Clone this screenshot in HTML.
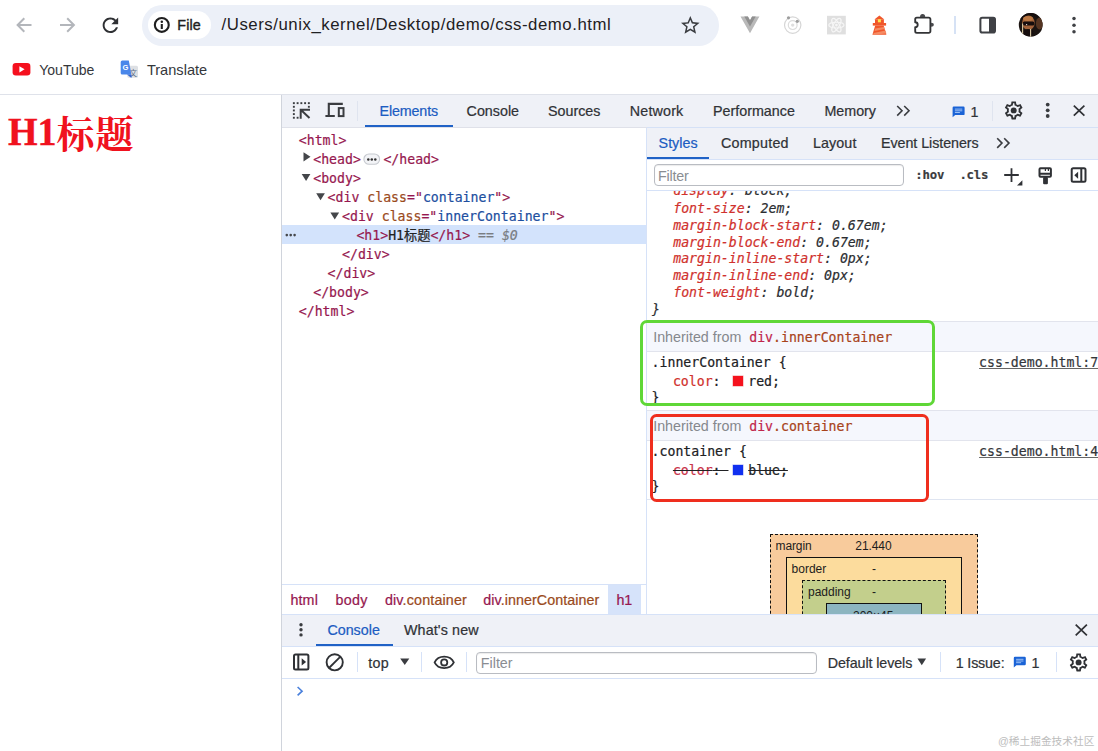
<!DOCTYPE html>
<html lang="zh">
<head>
<meta charset="utf-8">
<title>css-demo</title>
<style>
*{box-sizing:border-box;margin:0;padding:0}
html,body{width:1098px;height:751px;overflow:hidden;background:#fff}
body{position:relative;font-family:"Liberation Sans","Noto Sans CJK SC",sans-serif;color:#2b2d31;-webkit-font-smoothing:antialiased}
.a{position:absolute}
.t{position:absolute;white-space:nowrap;line-height:20px;height:20px}
.s{font-family:"Liberation Sans","Noto Sans CJK SC",sans-serif}
.m{font-family:"DejaVu Sans Mono","Liberation Mono","Noto Sans CJK SC",monospace;font-size:13.19px;-webkit-text-stroke:0.2px}
.av{color:#1d4f9f}
.pr{color:#d0312d}
.ui{font-size:14.3px;color:#303236;-webkit-text-stroke:0.22px}
.sel{color:#1b5cc2}
.tag{color:#96184f}
.an{color:#9a4a1c}
.vl{position:absolute;width:1px;background:#d6e2f8}
.hl{position:absolute;height:1px;background:#d6e2f8}
svg{position:absolute;overflow:visible}
</style>
</head>
<body>

<!-- ================= BROWSER CHROME ================= -->
<div class="a" id="chrome" style="left:0;top:0;width:1098px;height:94px;background:#fff"></div>
<div class="a" style="left:142px;top:5px;width:576.5px;height:40.5px;border-radius:20.25px;background:#ecf0f8"></div>
<div class="a" style="left:147.8px;top:10.6px;width:63.3px;height:28.6px;border-radius:14.3px;background:#fff"></div>
<div class="t s" id="file" style="left:177.3px;top:15.2px;font-size:14.3px;color:#1f1f1f;-webkit-text-stroke:0.4px #1f1f1f;letter-spacing:0.1px">File</div>
<div class="t s" id="url" style="left:221.6px;top:15.2px;font-size:16.8px;letter-spacing:0.535px;color:#1f2023">/Users/unix_kernel/Desktop/demo/css-demo.html</div>

<!-- bookmarks -->
<div class="t s" id="yt" style="left:39.2px;top:59.5px;font-size:14.05px;color:#35373b">YouTube</div>
<div class="t s" id="tr" style="left:146.9px;top:59.5px;font-size:14.6px;color:#35373b">Translate</div>
<div class="hl" style="left:0;top:94px;width:1098px;background:#dfe2ea"></div>

<!-- ================= PAGE ================= -->
<div class="a" id="h1" style="left:8px;top:110px;font-family:'Liberation Serif','Noto Serif CJK SC',serif;font-weight:bold;font-size:38px;line-height:46px;color:#f0121e;white-space:nowrap"><span id="h1lat" style="display:inline-block;transform:translateY(-0.6px) scaleY(1.065);transform-origin:50% 76%;-webkit-text-stroke:0.35px #f0121e">H1</span><span style="position:relative;top:1.6px;letter-spacing:0.9px">标题</span></div>

<!-- ================= DEVTOOLS ================= -->
<div class="vl" style="left:281px;top:95px;height:656px;background:#d0d4dc"></div>
<div class="a" id="dt-toolbar" style="left:282px;top:95px;width:816px;height:32px;background:#eff1f7"></div>
<div class="hl" style="left:282px;top:126.5px;width:365px;background:#dfe1e9"></div><div class="hl" style="left:647px;top:126.5px;width:451px;background:#d5e1f6"></div>

<div class="t s ui sel" id="tab-elements" style="left:379.5px;top:100.5px;letter-spacing:-0.13px">Elements</div>
<div class="a" style="left:365px;top:125px;width:87.5px;height:2px;background:#2062c6"></div>
<div class="t s ui" id="tab-console" style="left:466.6px;top:100.5px">Console</div>
<div class="t s ui" id="tab-sources" style="left:548px;top:100.5px">Sources</div>
<div class="t s ui" id="tab-network" style="left:629.8px;top:100.5px;letter-spacing:0.17px">Network</div>
<div class="t s ui" id="tab-perf" style="left:713px;top:100.5px">Performance</div>
<div class="t s ui" id="tab-memory" style="left:824.4px;top:100.5px">Memory</div>
<div class="t s ui" id="tab-one" style="left:970.5px;top:101.5px">1</div>
<div class="vl" style="left:356.5px;top:101px;height:20px;background:#dfe4ef"></div>
<div class="vl" style="left:991.5px;top:101px;height:20px;background:#dfe4ef"></div>

<!-- ELEMENTS TREE -->
<div class="a" style="left:282px;top:225.4px;width:364px;height:18.2px;background:#d3e3fc"></div>
<div class="t m tag" style="left:298.8px;top:130.5px">&lt;html&gt;</div>
<div class="t m tag" style="left:313.2px;top:149.6px">&lt;head&gt;<span style="display:inline-block;width:22.6px"></span>&lt;/head&gt;</div>
<div class="t m tag" style="left:313.2px;top:168.7px">&lt;body&gt;</div>
<div class="t m tag" style="left:327.6px;top:187.8px">&lt;div <span class="an">class</span>="<span class="av">container</span>"&gt;</div>
<div class="t m tag" style="left:342.0px;top:206.9px">&lt;div <span class="an">class</span>="<span class="av">innerContainer</span>"&gt;</div>
<div class="t m tag" id="h1line" style="left:356.4px;top:226.0px">&lt;h1&gt;<span style="color:#222">H1标题</span>&lt;/h1&gt;<span style="color:#7a7d82"> == <i>$0</i></span></div>
<div class="t m tag" style="left:342.0px;top:245.1px">&lt;/div&gt;</div>
<div class="t m tag" style="left:327.6px;top:264.2px">&lt;/div&gt;</div>
<div class="t m tag" style="left:313.2px;top:283.3px">&lt;/body&gt;</div>
<div class="t m tag" style="left:298.8px;top:302.4px">&lt;/html&gt;</div>

<!-- BREADCRUMBS -->
<div class="hl" style="left:282px;top:584px;width:364px"></div>
<div class="a" style="left:608px;top:585px;width:33px;height:29px;background:#d6e3fa"></div>
<div class="t s ui tag" id="bc-html" style="left:290.4px;top:590px;letter-spacing:0.15px">html</div>
<div class="t s ui tag" id="bc-body" style="left:335.4px;top:590px;letter-spacing:0.3px">body</div>
<div class="t s ui tag" id="bc-c" style="left:384.9px;top:590px;letter-spacing:0.16px">div<span class="an">.container</span></div>
<div class="t s ui tag" id="bc-ic" style="left:483.2px;top:590px;letter-spacing:0.07px">div<span class="an">.innerContainer</span></div>
<div class="t s ui tag" id="bc-h1" style="left:616.4px;top:590px">h1</div>

<!-- pane divider -->
<div class="vl" style="left:646px;top:128px;height:486px"></div>

<!-- STYLES PANE placeholder -->
<div id="styles">
<!-- styles tab bar -->
<div class="a" style="left:647px;top:128px;width:451px;height:31px;background:#eff1f7"></div>
<div class="hl" style="left:647px;top:159px;width:451px"></div>
<div class="t s ui sel" id="st-styles" style="left:658.6px;top:133px">Styles</div>
<div class="a" style="left:647px;top:157px;width:62px;height:2px;background:#2062c6"></div>
<div class="t s ui" id="st-computed" style="left:721px;top:133px;letter-spacing:0.22px">Computed</div>
<div class="t s ui" id="st-layout" style="left:813px;top:133px;letter-spacing:0.09px">Layout</div>
<div class="t s ui" id="st-events" style="left:881px;top:133px;letter-spacing:-0.06px">Event Listeners</div>
<!-- filter row -->
<div class="a" style="left:653.5px;top:164px;width:250px;height:22px;border:1px solid #b9bcc2;border-radius:4px;background:#fff;box-shadow:inset 0 1px 1px rgba(0,0,0,.08)"></div>
<div class="t s" id="st-filter" style="left:658px;top:165.5px;font-size:14.3px;color:#8a8d92;letter-spacing:-0.2px">Filter</div>
<div class="t m" id="st-hov" style="left:915.3px;top:165px;font-size:12.3px;font-weight:bold;color:#3a3c40;letter-spacing:-0.18px">:hov</div>
<div class="t m" id="st-cls" style="left:959.4px;top:165px;font-size:12.3px;font-weight:bold;color:#3a3c40;letter-spacing:-0.18px">.cls</div>
<div class="hl" style="left:647px;top:190px;width:451px"></div>
<!-- UA rule (clipped) -->
<div class="a" style="left:647px;top:191px;width:451px;height:130px;overflow:hidden">
 <div class="t m" style="left:26.2px;top:-10.2px;font-style:italic"><span class="pr">display</span>: block;</div>
</div>
<div class="t m" style="left:673.2px;top:198.8px;font-style:italic"><span class="pr">font-size</span>: 2em;</div>
<div class="t m" style="left:673.2px;top:215.6px;font-style:italic"><span class="pr">margin-block-start</span>: 0.67em;</div>
<div class="t m" style="left:673.2px;top:232.5px;font-style:italic"><span class="pr">margin-block-end</span>: 0.67em;</div>
<div class="t m" style="left:673.2px;top:249.3px;font-style:italic"><span class="pr">margin-inline-start</span>: 0px;</div>
<div class="t m" style="left:673.2px;top:266.2px;font-style:italic"><span class="pr">margin-inline-end</span>: 0px;</div>
<div class="t m" style="left:673.2px;top:283.0px;font-style:italic"><span class="pr">font-weight</span>: bold;</div>
<div class="t m" style="left:652.0px;top:299.8px;font-style:italic">}</div>

<!-- inherited 1 -->
<div class="a" style="left:647px;top:321.4px;width:451px;height:30.6px;background:#f5f7fd;border-top:1px solid #e2e4ed;border-bottom:1px solid #e2e4ed"></div>
<div class="t s" id="inh1" style="left:653.2px;top:326.5px;font-size:14.3px;color:#85888d">Inherited from</div>
<div class="t m" id="inh1m" style="left:749.2px;top:327.8px"><span style="color:#c0264b">div</span><span style="color:#a8431b">.innerContainer</span></div>
<div class="t m" style="left:651.6px;top:352.8px;color:#202124">.innerContainer {</div>
<div class="t m" style="left:672.9px;top:372.1px;color:#202124"><span class="pr">color</span>: </div>
<div class="a" style="left:732.6px;top:376.1px;width:10.8px;height:10.2px;background:#f5121d;box-shadow:0 0 0 .5px #f0a0a0"></div>
<div class="t m" style="left:748.2px;top:372.1px;color:#202124">red;</div>
<div class="t m" style="left:651.6px;top:388.3px;color:#202124">}</div>
<div class="t m" id="lnk7" style="left:979.1px;top:353.2px;color:#34363a;text-decoration:underline;text-decoration-thickness:1px;text-decoration-color:#666;text-underline-offset:1.2px">css-demo.html:7</div>

<!-- inherited 2 -->
<div class="a" style="left:647px;top:410.2px;width:451px;height:30.6px;background:#f5f7fd;border-top:1px solid #e2e4ed;border-bottom:1px solid #e2e4ed"></div>
<div class="t s" id="inh2" style="left:653.2px;top:415.5px;font-size:14.3px;color:#85888d">Inherited from</div>
<div class="t m" id="inh2m" style="left:749.2px;top:416.8px"><span style="color:#c0264b">div</span><span style="color:#a8431b">.container</span></div>
<div class="t m" style="left:651.6px;top:441.8px;color:#202124">.container {</div>
<div class="t m" style="left:672.9px;top:461.2px;color:#202124;text-decoration:line-through"><span style="color:#c9334a">color</span>:&nbsp;</div>
<div class="a" style="left:732.6px;top:465.1px;width:10.8px;height:10.2px;background:#1030f0;box-shadow:0 0 0 .5px #a0a8f0"></div>
<div class="t m" style="left:748.2px;top:461.2px;color:#202124;text-decoration:line-through">blue;</div>
<div class="t m" style="left:651.6px;top:476.8px;color:#202124">}</div>
<div class="t m" id="lnk4" style="left:979.1px;top:442.2px;color:#34363a;text-decoration:underline;text-decoration-thickness:1px;text-decoration-color:#666;text-underline-offset:1.2px">css-demo.html:4</div>
<div class="hl" style="left:647px;top:499px;width:451px;background:#dfe5f1"></div>

<!-- annotation boxes -->
<div class="a" style="left:640.1px;top:320px;width:295.2px;height:85.9px;border:3.7px solid #5fd737;border-radius:7px"></div>
<div class="a" style="left:650.4px;top:413.9px;width:278.9px;height:87.9px;border:3.7px solid #ef2e1e;border-radius:6.5px"></div>

<!-- box model -->
<div class="a" style="left:770px;top:533.5px;width:207.5px;height:90px;background:#f8cb9c;border:1px dashed #111"></div>
<div class="a" style="left:785.5px;top:557px;width:176.5px;height:70px;background:#fcdc9d;border:1px solid #111"></div>
<div class="a" style="left:802px;top:579.5px;width:143.5px;height:50px;background:#c3cf8c;border:1px dashed #111"></div>
<div class="a" style="left:826px;top:602.5px;width:96px;height:30px;background:#8cb5c0;border:1px solid #111"></div>
<div class="t s" id="bm-margin" style="left:775.5px;top:536px;font-size:12px;color:#1c1c1c;letter-spacing:-0.11px">margin</div>
<div class="t s" id="bm-val" style="left:855.3px;top:536px;font-size:12px;color:#1c1c1c;letter-spacing:-0.08px">21.440</div>
<div class="t s" id="bm-border" style="left:791.6px;top:558.5px;font-size:12px;color:#1c1c1c">border</div>
<div class="t s" style="left:872px;top:558.5px;font-size:12px;color:#1c1c1c">-</div>
<div class="t s" id="bm-padding" style="left:808px;top:581.5px;font-size:12px;color:#1c1c1c">padding</div>
<div class="t s" style="left:872px;top:581.5px;font-size:12px;color:#1c1c1c">-</div>
<div class="t s" style="left:853px;top:606px;font-size:12px;color:#1c1c1c">200&#215;45</div>
</div>

<!-- DRAWER placeholder -->
<div id="drawer">
<div class="a" style="left:282px;top:614px;width:816px;height:137px;background:#fff"></div>
<div class="a" style="left:282px;top:614px;width:816px;height:32px;background:#eff1f7;border-top:1px solid #d6e2f8"></div>
<div class="hl" style="left:282px;top:646px;width:816px"></div>
<div class="t s ui sel" id="dr-console" style="left:327.4px;top:620px">Console</div>
<div class="a" style="left:315.7px;top:644px;width:77px;height:2px;background:#2062c6"></div>
<div class="t s ui" id="dr-whatsnew" style="left:404px;top:620px;letter-spacing:0.12px">What's new</div>
<!-- console toolbar -->
<div class="hl" style="left:282px;top:678px;width:816px"></div>
<div class="vl" style="left:356.5px;top:652px;height:20px"></div>
<div class="vl" style="left:421px;top:652px;height:20px"></div>
<div class="vl" style="left:466px;top:652px;height:20px"></div>
<div class="vl" style="left:940px;top:652px;height:20px"></div>
<div class="vl" style="left:1056px;top:652px;height:20px"></div>
<div class="t s ui" id="dr-top" style="left:368.3px;top:652.5px;letter-spacing:0.24px">top</div>
<div class="a" style="left:475.5px;top:652px;width:341px;height:21.5px;border:1px solid #b9bcc2;border-radius:4px;background:#fff;box-shadow:inset 0 1px 1px rgba(0,0,0,.08)"></div>
<div class="t s" id="dr-filter" style="left:480.8px;top:652.5px;font-size:14.3px;color:#8a8d92">Filter</div>
<div class="t s ui" id="dr-levels" style="left:827.7px;top:652.5px;letter-spacing:-0.09px">Default levels</div>
<div class="t s ui" id="dr-issue" style="left:955.8px;top:652.5px;letter-spacing:-0.18px">1 Issue:</div>
<div class="t s ui" id="dr-one" style="left:1031.5px;top:652.5px">1</div>
<!-- watermark -->
<div class="t s" id="wm" style="left:998px;top:731px;font-size:10.7px;color:#bdbdbd;text-shadow:0 0 1px #fff,0 0 2px #fff">@稀土掘金技术社区</div>
</div>

<svg id="icons" width="1098" height="751" viewBox="0 0 1098 751" style="left:0;top:0;pointer-events:none">
<path d="M31.5 25H18M24.3 18.3L17.6 25l6.7 6.7" stroke="#b3b6bb" stroke-width="2" fill="none"/>
<path d="M60 25h13.5M67.2 18.3l6.7 6.7-6.7 6.7" stroke="#b3b6bb" stroke-width="2" fill="none"/>
<g transform="translate(110.4 25.2) scale(0.97) translate(-12 -12)"><path fill="#2e3033" d="M17.65 6.35C16.2 4.9 14.21 4 12 4c-4.42 0-7.99 3.58-7.99 8s3.57 8 7.99 8c3.73 0 6.84-2.55 7.73-6h-2.08c-.82 2.33-3.04 4-5.65 4-3.31 0-6-2.69-6-6s2.69-6 6-6c1.66 0 3.14.69 4.22 1.78L13 11h7V4l-2.35 2.35z"/></g>
<circle cx="161.800" cy="24.900" r="6.950" stroke="#1f1f1f" stroke-width="2.100" fill="none"/><circle cx="161.800" cy="21.700" r="1.250" fill="#1f1f1f"/><path d="M161.800 24v5" stroke="#1f1f1f" stroke-width="2.100"/>
<g transform="translate(690.3 24.8) scale(0.93) translate(-12 -11.5)"><path fill="#3a3c40" d="M22 9.24l-7.19-.62L12 2 9.19 8.63 2 9.24l5.46 4.73L5.82 21 12 17.27 18.18 21l-1.63-7.03L22 9.24zM12 15.4l-3.76 2.27 1-4.28-3.32-2.88 4.38-.38L12 6.1l1.71 4.04 4.38.38-3.32 2.88 1 4.28L12 15.4z"/></g>
<path d="M740.5 16.6h7.4l2.1 3.6 2.1-3.6h7.3L750 33.2z" fill="#b9b9b9"/><path d="M744.3 16.6h3.6l2.1 3.6 2.1-3.6h3.6L750 26.6z" fill="#909090"/>
<circle cx="792.7" cy="25.1" r="8.2" stroke="#d6d6d6" stroke-width="1.2" fill="none"/><circle cx="792.7" cy="25.1" r="4.4" stroke="#dcdcdc" stroke-width="1.2" fill="none"/><circle cx="792.7" cy="25.1" r="1.7" fill="#dedede"/><circle cx="788.5" cy="17.8" r="1.6" fill="#9d9d9d"/><circle cx="797.3" cy="21.3" r="1.6" fill="#9d9d9d"/>
<rect x="827" y="15.8" width="18.8" height="18.6" fill="#dfdfdf"/><g stroke="#f6f6f6" stroke-width="1.1" fill="none"><ellipse cx="836.4" cy="25.1" rx="7.6" ry="2.9"/><ellipse cx="836.4" cy="25.1" rx="7.6" ry="2.9" transform="rotate(60 836.4 25.1)"/><ellipse cx="836.4" cy="25.1" rx="7.6" ry="2.9" transform="rotate(120 836.4 25.1)"/></g><circle cx="836.4" cy="25.1" r="1.4" fill="#f6f6f6"/>
<path d="M879.4 15.4l5 4.2h-10z" fill="#f0562a"/><rect x="875" y="19.4" width="8.9" height="4.2" fill="#f0562a"/><rect x="877.9" y="19.2" width="3" height="3.1" fill="#ffe44f"/><rect x="872.8" y="23" width="13.3" height="2.6" fill="#f0562a"/><path d="M875.2 25.6h8.4l2.8 9.1h-14z" fill="#f0562a"/><path d="M875.2 28.4l8.9-1.4.6 2-10.2 2.1zM873.6 33l11.9-2.6.9 3-13.1 1.3z" fill="#f58b63"/>
<path d="M916.800 17.600H928.800a1.600 1.600 0 0 1 1.600 1.600V31.200a1.600 1.600 0 0 1-1.600 1.600H916.800a1.600 1.600 0 0 1-1.600-1.600V27.200a2.500 2.500 0 0 0 0-5V19.200a1.600 1.600 0 0 1 1.600-1.600z" stroke="#333436" stroke-width="1.850" fill="none" stroke-linejoin="round"/><path d="M920 17a2.600 3 0 0 1 5.200 0zM931 22.800a2.800 1.950 0 0 1 0 3.900z" fill="#47484b"/>
<path d="M955 16v18" stroke="#c8d9f2" stroke-width="1.5"/>
<rect x="980.4" y="17.7" width="14.6" height="14.8" rx="1.8" stroke="#3f4145" stroke-width="2" fill="none"/><rect x="989" y="17.7" width="6" height="14.8" fill="#3f4145"/>
<g><defs><clipPath id="avc"><circle cx="1030.700" cy="24.900" r="11.900"/></clipPath><filter id="avb" x="-20%" y="-20%" width="140%" height="140%"><feGaussianBlur stdDeviation="0.550"/></filter></defs><g clip-path="url(#avc)"><rect x="1018" y="12" width="26" height="26" fill="#1b1411"/><g filter="url(#avb)"><ellipse cx="1039.500" cy="23.500" rx="3.600" ry="6" fill="#553624"/><ellipse cx="1028.400" cy="22.800" rx="6.300" ry="7.200" fill="#a3643a"/><ellipse cx="1028" cy="18.600" rx="5" ry="2.400" fill="#bd7a45"/><path d="M1019 18c2-7 16-8 20-1l-2 1c-4-4-12-4-15 1z" fill="#15100d"/><rect x="1022.800" y="21.500" width="11.600" height="4.100" rx="1.600" fill="#150b0d"/><ellipse cx="1028" cy="32.500" rx="5.500" ry="3.600" fill="#17110f"/><circle cx="1026.600" cy="24.600" r=".7" fill="#f0e6e0"/><path d="M1022.600 23.500V34M1030.600 29v8" stroke="#d9c8a2" stroke-width="1.100"/></g></g></g>
<circle cx="1074" cy="18.5" r="1.75" fill="#3f4145"/><circle cx="1074" cy="25.2" r="1.75" fill="#3f4145"/><circle cx="1074" cy="31.8" r="1.75" fill="#3f4145"/>
<rect x="12.6" y="63.1" width="17.8" height="12.4" rx="3.3" fill="#f5101e"/><path d="M19.4 66.3v6.1l5.2-3.05z" fill="#fff"/>
<rect x="127.4" y="65.8" width="10.6" height="12" rx="1.5" fill="#dde0e4"/><text x="129.6" y="76" font-family="'Noto Sans CJK SC',sans-serif" font-size="7.5" fill="#5b6b86">文</text><path d="M122.2 60.6h6.6l2.6 13.9h-9.2a1.5 1.5 0 0 1-1.5-1.5V62.100a1.500 1.500 0 0 1 1.500-1.500z" fill="#4a87ea"/><path d="M127 74.500h4.400l.1 3.500z" fill="#3367d6"/><text x="122.6" y="70.200" font-family="'Liberation Sans',sans-serif" font-weight="bold" font-size="7.600" fill="#fff">G</text>
<g fill="#3a3c40"><rect x="292.90" y="102.2" width="1.9" height="1.9"/><rect x="296.65" y="102.2" width="1.9" height="1.9"/><rect x="300.40" y="102.2" width="1.9" height="1.9"/><rect x="304.15" y="102.2" width="1.9" height="1.9"/><rect x="307.90" y="102.2" width="1.9" height="1.9"/><rect x="292.9" y="105.85" width="1.9" height="1.9"/><rect x="292.9" y="109.50" width="1.9" height="1.9"/><rect x="292.9" y="113.15" width="1.9" height="1.9"/><rect x="292.9" y="116.80" width="1.9" height="1.9"/><rect x="307.9" y="105.85" width="1.9" height="1.9"/><rect x="296.65" y="116.8" width="1.9" height="1.9"/></g>
<path d="M310 109.700H300.700V118.800M301.300 110.300l8.200 7.600" stroke="#3a3c40" stroke-width="2" fill="none"/>
<path d="M342.800 103.900H328.800V116M325.400 116h9.400" stroke="#3a3c40" stroke-width="2.100" fill="none"/><rect x="338.800" y="108.100" width="4.700" height="8" stroke="#3a3c40" stroke-width="2" fill="none"/>
<path d="M897.2 106l4.8 4.8-4.8 4.8M904.2 106l4.8 4.8-4.8 4.8" stroke="#3a3c40" stroke-width="1.6" fill="none"/>
<g transform="translate(952.6 106.5)"><path d="M1.2 0h9.6a1.2 1.2 0 0 1 1.2 1.2v6.2a1.2 1.2 0 0 1-1.2 1.2H2.6L0 10.8V1.2A1.2 1.2 0 0 1 1.2 0z" fill="#1a63d6"/><path d="M2.3 2.6h7.4M2.3 4.3h7.4M2.3 6h5" stroke="#a9c8f6" stroke-width="0.9" fill="none"/></g>
<g transform="translate(1013.7 110.4) scale(0.9) translate(-12 -12)" fill="#2f3135"><path d="M19.43 12.98c.04-.32.07-.64.07-.98 0-.34-.03-.66-.07-.98l2.11-1.65c.19-.15.24-.42.12-.64l-2-3.46c-.09-.16-.26-.25-.44-.25-.06 0-.12.01-.17.03l-2.49 1c-.52-.4-1.08-.73-1.69-.98l-.38-2.65C14.46 2.18 14.25 2 14 2h-4c-.25 0-.46.18-.49.42l-.38 2.65c-.61.25-1.17.59-1.69.98l-2.49-1c-.06-.02-.12-.03-.18-.03-.17 0-.34.09-.43.25l-2 3.46c-.13.22-.07.49.12.64l2.11 1.65c-.04.32-.07.65-.07.98 0 .33.03.66.07.98l-2.11 1.65c-.19.15-.24.42-.12.64l2 3.46c.09.16.26.25.44.25.06 0 .12-.01.17-.03l2.49-1c.52.4 1.08.73 1.69.98l.38 2.65c.03.24.24.42.49.42h4c.25 0 .46-.18.49-.42l.38-2.65c.61-.25 1.17-.59 1.69-.98l2.49 1c.06.02.12.03.18.03.17 0 .34-.09.43-.25l2-3.46c.12-.22.07-.49-.12-.64l-2.11-1.65zm-1.98-1.71c.04.31.05.52.05.73 0 .21-.02.43-.05.73l-.14 1.13.89.7 1.08.84-.7 1.21-1.27-.51-1.04-.42-.9.68c-.43.32-.84.56-1.25.73l-1.06.43-.16 1.13-.2 1.35h-1.4l-.19-1.35-.16-1.13-1.06-.43c-.43-.18-.83-.41-1.23-.71l-.91-.7-1.06.43-1.27.51-.7-1.21 1.08-.84.89-.7-.14-1.13c-.03-.31-.05-.54-.05-.74s.02-.43.05-.73l.14-1.13-.89-.7-1.08-.84.7-1.21 1.27.51 1.04.42.9-.68c.43-.32.84-.56 1.25-.73l1.06-.43.16-1.13.2-1.35h1.39l.19 1.35.16 1.13 1.06.43c.43.18.83.41 1.23.71l.91.7 1.06-.43 1.27-.51.7 1.21-1.07.85-.89.7.14 1.13z"/><circle cx="12" cy="12" r="3.3"/></g>
<circle cx="1047.7" cy="104.6" r="1.9" fill="#3a3c40"/><circle cx="1047.7" cy="110.3" r="1.9" fill="#3a3c40"/><circle cx="1047.7" cy="116" r="1.9" fill="#3a3c40"/>
<path d="M1073.800 105.700l10.600 10M1084.400 105.700l-10.600 10" stroke="#2f3135" stroke-width="1.700"/>
<g fill="#44464a"><path d="M303.500 152.200l7 4.600-7 4.600z"/><path d="M301.700 174h8.700l-4.350 6.900z"/><path d="M316.200 193.300h8.700l-4.350 6.900z"/><path d="M330.400 212.500h8.700l-4.350 6.900z"/></g>
<rect x="363.900" y="154" width="15.700" height="10.300" rx="5.150" fill="#f3f4f7" stroke="#c6c9cf" stroke-width="1.100"/><g fill="#333"><circle cx="368.300" cy="159.400" r="1.250"/><circle cx="371.800" cy="159.400" r="1.250"/><circle cx="375.300" cy="159.400" r="1.250"/></g>
<g fill="#44464a"><circle cx="286.800" cy="235.100" r="1.300"/><circle cx="290.700" cy="235.100" r="1.300"/><circle cx="294.600" cy="235.100" r="1.300"/></g>
<path d="M997.2 138.3l4.8 4.8-4.8 4.8M1004.2 138.3l4.8 4.8-4.8 4.8" stroke="#3a3c40" stroke-width="1.6" fill="none"/>
<path d="M1004.200 175h14.600M1011.500 168.200v13.700" stroke="#2f3135" stroke-width="1.800"/><path d="M1022.400 180.200v5.300h-5.400z" fill="#2f3135"/>
<path d="M1040.500 168.300h9.400a1 1 0 0 1 1 1v6.400a1 1 0 0 1-1 1h-9.400a1 1 0 0 1-1-1v-6.400a1 1 0 0 1 1-1zM1039.500 173.700h11.400" stroke="#2f3135" stroke-width="2" fill="none"/><path d="M1045.400 168v3M1048.400 168v3" stroke="#2f3135" stroke-width="1.200"/><rect x="1043.100" y="177" width="4.800" height="7.300" rx="1" fill="#2f3135"/>
<rect x="1071.700" y="168.300" width="13.800" height="13.500" rx="1.500" stroke="#2f3135" stroke-width="2" fill="none"/><path d="M1081.300 168.300v13.500" stroke="#2f3135" stroke-width="2"/><path d="M1078.100 171.800v7l-3.800-3.500z" fill="#2f3135"/>
<circle cx="301" cy="624.7" r="1.7" fill="#3a3c40"/><circle cx="301" cy="629.8" r="1.7" fill="#3a3c40"/><circle cx="301" cy="634.9" r="1.7" fill="#3a3c40"/>
<path d="M1075.700 624.700l11.200 10.700M1086.900 624.700l-11.200 10.700" stroke="#2f3135" stroke-width="1.700"/>
<rect x="294" y="654.400" width="14.400" height="15" rx="1.500" stroke="#2f3135" stroke-width="2" fill="none"/><path d="M298.300 654.400v15" stroke="#2f3135" stroke-width="2"/><path d="M301.700 658.300v7.200l4.400-3.600z" fill="#2f3135"/>
<circle cx="334.700" cy="662.300" r="8.100" stroke="#2f3135" stroke-width="1.900" fill="none"/><path d="M329 668L340.400 656.600" stroke="#2f3135" stroke-width="1.800"/>
<path d="M400.200 658.400h9.100l-4.550 6.500z" fill="#3a3c40"/>
<path d="M434.600 662.400c3.600-7.600 15.600-7.600 19.200 0-3.600 7.600-15.600 7.600-19.200 0z" stroke="#2f3135" stroke-width="1.800" fill="none"/><circle cx="444.200" cy="662.400" r="3.100" stroke="#2f3135" stroke-width="1.800" fill="none"/>
<path d="M917.500 658.500h8.600l-4.300 6.800z" fill="#3a3c40"/>
<g transform="translate(1013.8 656.7)"><path d="M1.2 0h9.6a1.2 1.2 0 0 1 1.2 1.2v6.2a1.2 1.2 0 0 1-1.2 1.2H2.6L0 10.8V1.2A1.2 1.2 0 0 1 1.2 0z" fill="#1a63d6"/><path d="M2.3 2.6h7.4M2.3 4.3h7.4M2.3 6h5" stroke="#a9c8f6" stroke-width="0.9" fill="none"/></g>
<g transform="translate(1078.6 662.4) scale(0.9) translate(-12 -12)" fill="#2f3135"><path d="M19.43 12.98c.04-.32.07-.64.07-.98 0-.34-.03-.66-.07-.98l2.11-1.65c.19-.15.24-.42.12-.64l-2-3.46c-.09-.16-.26-.25-.44-.25-.06 0-.12.01-.17.03l-2.49 1c-.52-.4-1.08-.73-1.69-.98l-.38-2.65C14.46 2.18 14.25 2 14 2h-4c-.25 0-.46.18-.49.42l-.38 2.65c-.61.25-1.17.59-1.69.98l-2.49-1c-.06-.02-.12-.03-.18-.03-.17 0-.34.09-.43.25l-2 3.46c-.13.22-.07.49.12.64l2.11 1.65c-.04.32-.07.65-.07.98 0 .33.03.66.07.98l-2.11 1.65c-.19.15-.24.42-.12.64l2 3.46c.09.16.26.25.44.25.06 0 .12-.01.17-.03l2.49-1c.52.4 1.08.73 1.69.98l.38 2.65c.03.24.24.42.49.42h4c.25 0 .46-.18.49-.42l.38-2.65c.61-.25 1.17-.59 1.69-.98l2.49 1c.06.02.12.03.18.03.17 0 .34-.09.43-.25l2-3.46c.12-.22.07-.49-.12-.64l-2.11-1.65zm-1.98-1.71c.04.31.05.52.05.73 0 .21-.02.43-.05.73l-.14 1.13.89.7 1.08.84-.7 1.21-1.27-.51-1.04-.42-.9.68c-.43.32-.84.56-1.25.73l-1.06.43-.16 1.13-.2 1.35h-1.4l-.19-1.35-.16-1.13-1.06-.43c-.43-.18-.83-.41-1.23-.71l-.91-.7-1.06.43-1.27.51-.7-1.21 1.08-.84.89-.7-.14-1.13c-.03-.31-.05-.54-.05-.74s.02-.43.05-.73l.14-1.13-.89-.7-1.08-.84.7-1.21 1.27.51 1.04.42.9-.68c.43-.32.84-.56 1.25-.73l1.06-.43.16-1.13.2-1.35h1.39l.19 1.35.16 1.13 1.06.43c.43.18.83.41 1.23.71l.91.7 1.06-.43 1.27-.51.7 1.21-1.07.85-.89.7.14 1.13z"/><circle cx="12" cy="12" r="3.3"/></g>
<path d="M297.600 687l4.500 4.200-4.500 4.200" stroke="#4a80dc" stroke-width="1.600" fill="none"/>
</svg>
</body>
</html>
